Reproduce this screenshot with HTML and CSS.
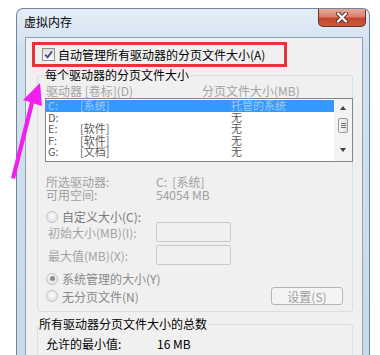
FILE: index.html
```html
<!DOCTYPE html>
<html lang="zh-CN">
<head>
<meta charset="utf-8">
<title>虚拟内存</title>
<link rel="stylesheet" href="styles.css">
</head>
<body>
<svg class="arrow" width="60" height="200" viewBox="0 0 60 200">
  <polygon points="40,83 42,106 34,103.5 15,179 11,178 30,102 23,100" fill="#f21ef0"/>
</svg>
<div class="window">
  <div class="titlebar">
    <span class="title">虚拟内存</span>
    <div class="close">
      <svg width="14" height="11" viewBox="0 0 14 11">
        <path d="M3 1.5 L11 9.5 M11 1.5 L3 9.5" stroke="#5b2a22" stroke-width="4.2" stroke-linecap="round"/>
        <path d="M3 1.5 L11 9.5 M11 1.5 L3 9.5" stroke="#ffffff" stroke-width="2.4" stroke-linecap="round"/>
      </svg>
    </div>
  </div>
  <div class="frame">
    <div class="content">
      <div class="autobox">
        <span class="checkbox">
          <svg width="11" height="11" viewBox="0 0 11 11"><path d="M2.2 5.6 L4.6 8.4 L9 2.4" fill="none" stroke="#3d5087" stroke-width="1.8"/></svg>
        </span>
        <span class="autotext">自动管理所有驱动器的分页文件大小(A)</span>
      </div>

      <div class="group g1">
        <div class="glabel">每个驱动器的分页文件大小</div>
        <div class="cols"><span class="c1">驱动器 [卷标](D)</span><span>分页文件大小(MB)</span></div>
        <div class="list">
          <div class="rows">
            <div class="row sel"><span class="d">C:</span><span class="l">[系统]</span><span>托管的系统</span></div>
            <div class="row"><span class="d">D:</span><span class="l"></span><span>无</span></div>
            <div class="row"><span class="d">E:</span><span class="l">[软件]</span><span>无</span></div>
            <div class="row"><span class="d">F:</span><span class="l">[软件]</span><span>无</span></div>
            <div class="row"><span class="d">G:</span><span class="l">[文档]</span><span>无</span></div>
          </div>
          <div class="scrollbar">
            <span class="tri up"></span>
            <span class="thumb"><i></i><i></i><i></i></span>
            <span class="tri down"></span>
          </div>
        </div>
        <div class="info">
          <div class="irow"><span class="ilabel">所选驱动器:</span><span>C:&nbsp;&nbsp;[系统]</span></div>
          <div class="irow"><span class="ilabel">可用空间:</span><span>54054 MB</span></div>
        </div>
        <div class="radiorow r1"><span class="radio"></span><span class="rtext dark">自定义大小(C):</span></div>
        <div class="field f1"><span class="flabel">初始大小(MB)(I):</span><span class="input"></span></div>
        <div class="field f2"><span class="flabel">最大值(MB)(X):</span><span class="input"></span></div>
        <div class="radiorow r2"><span class="radio on"></span><span class="rtext">系统管理的大小(Y)</span></div>
        <div class="radiorow r3"><span class="radio"></span><span class="rtext">无分页文件(N)</span><span class="button">设置(S)</span></div>
      </div>

      <div class="group g2">
        <div class="glabel g2label">所有驱动器分页文件大小的总数</div>
        <div class="trow"><span class="tlabel">允许的最小值:</span><span>16 MB</span></div>
      </div>
    </div>
  </div>
</div>
</body>
</html>
```
FILE: styles.css
```css
html, body {
  margin: 0;
  padding: 0;
}
body {
  background: #ffffff;
  font-family: "Noto Sans CJK SC", "Noto Sans", sans-serif;
  font-size: 12px;
  color: #000;
  width: 380px;
  height: 355px;
  overflow: hidden;
  position: relative;
}
.arrow {
  position: absolute;
  left: 0;
  top: 0;
  z-index: 5;
}
.window {
  margin: 8px 0 0 16px;
  width: 354px;
  height: 347px;
  box-sizing: border-box;
  border: 1px solid #72849a;
  border-bottom: none;
  border-radius: 7px 7px 0 0;
  background: linear-gradient(to bottom, #e4edf7 0px, #d3e1ef 40px, #c8d9ea 347px);
  overflow: hidden;
}
.titlebar {
  height: 28px;
  display: flex;
  align-items: flex-start;
}
.title {
  margin: 6px 0 0 7px;
  line-height: 14px;
  font-size: 12px;
  color: #000;
}
.close {
  margin-left: auto;
  margin-right: 3px;
  width: 48px;
  height: 18px;
  box-sizing: border-box;
  border: 1px solid #6e3128;
  border-top: none;
  border-radius: 0 0 5px 5px;
  background: linear-gradient(to bottom, #e9a99a 0%, #d9806b 45%, #c4452d 55%, #c85a3e 100%);
  display: flex;
  align-items: center;
  justify-content: center;
}
.frame {
  display: flex;
  padding: 0 6px 0 8px;
}
.content {
  width: 338px;
  height: 320px;
  box-sizing: border-box;
  border: 1px solid #8ea0b4;
  border-bottom: none;
  background: #f0f0f0;
  overflow: hidden;
}
.autobox {
  margin: 4px 0 0 6px;
  width: 255px;
  height: 25px;
  box-sizing: border-box;
  border: 3px solid #e6343a;
  display: flex;
  align-items: center;
}
.checkbox {
  width: 13px;
  height: 13px;
  margin-left: 7px;
  box-sizing: border-box;
  border: 1px solid #8e8f8f;
  background: linear-gradient(to bottom, #dedede, #fbfbfb);
  display: flex;
  align-items: center;
  justify-content: center;
}
.autotext {
  margin-left: 3px;
  line-height: 13px;
}
.group {
  box-sizing: border-box;
  border: 1px solid #d5dfe5;
  border-radius: 3px;
}
.g1 {
  margin: 8px 0 0 11px;
  width: 316px;
  padding-bottom: 6px;
}
.glabel {
  display: table;
  margin: -7px 0 0 6px;
  padding: 0 1px;
  background: #f0f0f0;
  line-height: 12px;
}
.cols {
  display: flex;
  margin-top: 4px;
  padding-left: 8px;
  color: #a3a3a3;
  line-height: 12px;
}
.c1 {
  width: 156px;
}
.list {
  margin: 1px -1px 0 7px;
  height: 64px;
  box-sizing: border-box;
  border: 1px solid #828790;
  background: #fff;
  display: flex;
}
.rows {
  flex: 1;
  padding-top: 1px;
}
.row {
  display: flex;
  height: 11.5px;
  line-height: 11.5px;
  font-size: 11px;
  padding-left: 2px;
  color: #5a5a5a;
}
.row.sel {
  background: #3399ff;
  color: #a2c9ef;
}
.d {
  width: 32px;
}
.l {
  width: 151px;
}
.scrollbar {
  width: 18px;
  background: #f3f3f3;
  display: flex;
  flex-direction: column;
  align-items: center;
  padding-top: 7px;
  box-sizing: border-box;
}
.tri {
  width: 0;
  height: 0;
  border-left: 3.5px solid transparent;
  border-right: 3.5px solid transparent;
}
.tri.up {
  border-bottom: 4px solid #404040;
}
.tri.down {
  border-top: 4px solid #404040;
  margin-top: 15px;
}
.thumb {
  margin-top: 8px;
  width: 10px;
  height: 15px;
  box-sizing: border-box;
  border: 1px solid #9a9a9a;
  border-radius: 2px;
  background: linear-gradient(to right, #f6f6f6, #e2e2e2);
  display: flex;
  flex-direction: column;
  justify-content: center;
  align-items: center;
  gap: 1px;
}
.thumb i {
  display: block;
  width: 5px;
  height: 1px;
  background: #707070;
}
.info {
  margin-top: 13px;
  padding-left: 8px;
  color: #a0a0a0;
}
.irow {
  display: flex;
  line-height: 13px;
  height: 13px;
}
.ilabel {
  width: 110px;
}
.radiorow {
  display: flex;
  align-items: center;
  padding-left: 8px;
}
.r1 {
  margin-top: 9px;
  height: 13px;
}
.r2 {
  margin-top: 7px;
  height: 13px;
}
.r3 {
  margin-top: 2px;
  height: 18px;
}
.radio {
  width: 12px;
  height: 12px;
  box-sizing: border-box;
  border: 1px solid #c2c2c2;
  border-radius: 50%;
  background: radial-gradient(circle at 50% 40%, #fbfbfb 0%, #e6e6e6 70%, #d8d8d8 100%);
  display: flex;
  align-items: center;
  justify-content: center;
}
.radio.on::after {
  content: "";
  width: 5px;
  height: 5px;
  border-radius: 50%;
  background: radial-gradient(circle, #9a9a9a, #7a7a7a);
}
.rtext {
  margin-left: 4px;
  line-height: 13px;
  color: #8a8a8a;
}
.rtext.dark {
  color: #7a7a7a;
}
.field {
  display: flex;
  align-items: center;
  padding-left: 10px;
  height: 20px;
  color: #a3a3a3;
}
.f1 {
  margin-top: -1px;
}
.f2 {
  margin-top: 3px;
}
.flabel {
  width: 108px;
  line-height: 13px;
}
.input {
  width: 75px;
  height: 20px;
  box-sizing: border-box;
  border: 1px solid #c9c9c9;
  border-radius: 2px;
  background: #f0f0f0;
}
.button {
  margin-left: auto;
  margin-right: 9px;
  width: 72px;
  height: 18px;
  box-sizing: border-box;
  border: 1px solid #b5b5b5;
  border-radius: 3px;
  background: #f4f4f4;
  color: #a0a0a0;
  display: flex;
  align-items: center;
  justify-content: center;
  line-height: 13px;
}
.g2 {
  margin: 12px 0 0 11px;
  width: 316px;
  padding-bottom: 10px;
}
.g2label {
  margin-left: 0;
}
.trow {
  display: flex;
  margin-top: 7px;
  padding-left: 8px;
  line-height: 13px;
}
.tlabel {
  width: 111px;
}
```
